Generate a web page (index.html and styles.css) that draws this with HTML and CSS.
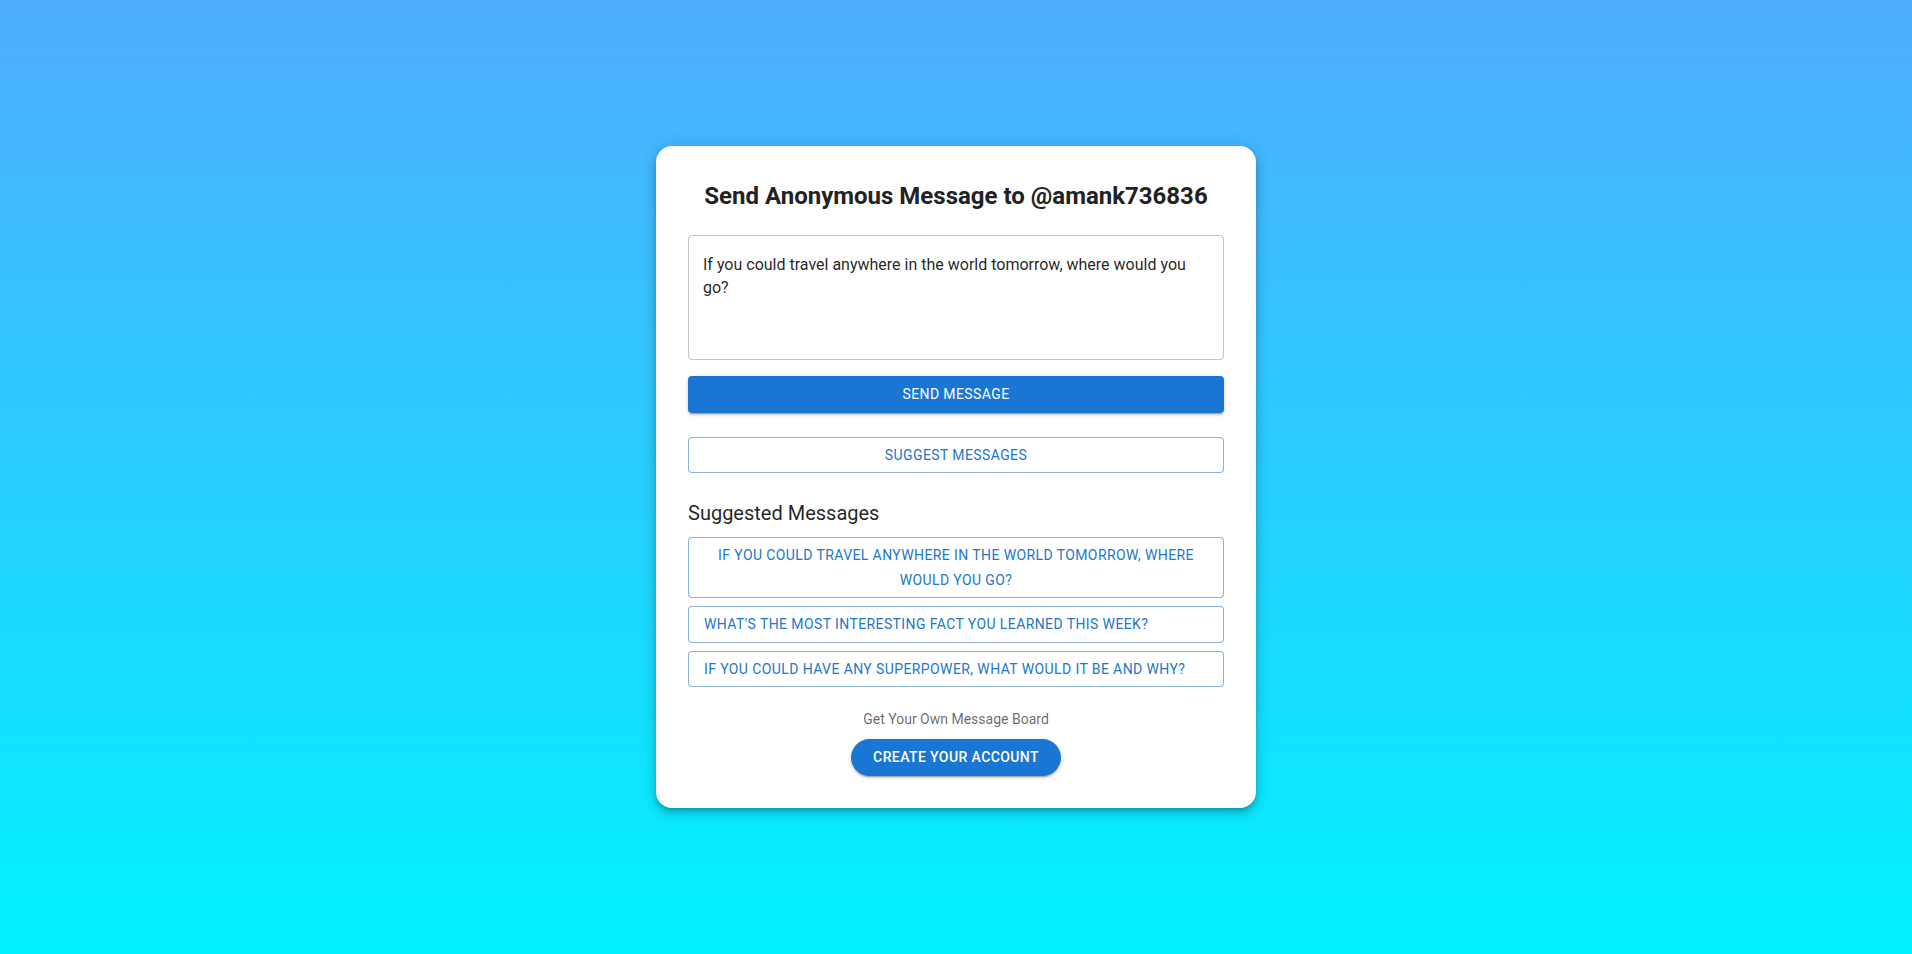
FILE: index.html
```html
<!DOCTYPE html>
<html lang="en">
<head>
    <meta charset="UTF-8">
    <meta name="viewport" content="width=device-width, initial-scale=1.0">
    <title>Send Anonymous Message</title>
    <link rel="stylesheet" href="styles.css">
</head>
<body>
    <main class="page">
        <section class="card">
            <h1 class="title">Send Anonymous Message to @amank736836</h1>

            <div class="field">
                <textarea class="field-input" rows="4">If you could travel anywhere in the world tomorrow, where would you go?</textarea>
            </div>

            <button class="btn btn-contained btn-full">Send Message</button>
            <button class="btn btn-outlined btn-full btn-suggest">Suggest Messages</button>

            <h2 class="subtitle">Suggested Messages</h2>
            <div class="suggestions">
                <button class="btn btn-outlined btn-full btn-left">If you could travel anywhere in the world tomorrow, where would you go?</button>
                <button class="btn btn-outlined btn-full btn-left">What's the most interesting fact you learned this week?</button>
                <button class="btn btn-outlined btn-full btn-left">If you could have any superpower, what would it be and why?</button>
            </div>

            <div class="signup">
                <p class="signup-text">Get Your Own Message Board</p>
                <button class="btn btn-contained btn-pill">Create Your Account</button>
            </div>
        </section>
    </main>
</body>
</html>
```

FILE: styles.css
```css
* {
    margin: 0;
    padding: 0;
    box-sizing: border-box;
    font-family: Roboto, 'Helvetica Neue', Arial, sans-serif;
}

body {
    background: linear-gradient(to bottom, #4facfe, #00f2fe);
    color: rgba(0, 0, 0, 0.87);
    min-height: 100vh;
}

.page {
    min-height: 100vh;
    display: flex;
    align-items: center;
    justify-content: center;
}

.card {
    width: 600px;
    background: #fff;
    border-radius: 16px;
    padding: 32px;
    box-shadow: 0 3px 5px -1px rgba(0, 0, 0, 0.2),
                0 6px 10px 0 rgba(0, 0, 0, 0.14),
                0 1px 18px 0 rgba(0, 0, 0, 0.12);
}

.title {
    font-size: 24px;
    font-weight: 700;
    line-height: 1.334;
    text-align: center;
    color: #222;
    padding-top: 2px;
    margin-bottom: 23px;
}

.field {
    border: 1px solid rgba(0, 0, 0, 0.23);
    border-radius: 4px;
    padding: 16.5px 14px;
}

.field-input {
    display: block;
    width: 100%;
    height: 90px;
    border: none;
    outline: none;
    resize: none;
    font-size: 16px;
    line-height: 23px;
    color: rgba(0, 0, 0, 0.87);
    background: transparent;
}

.btn {
    display: inline-flex;
    align-items: center;
    justify-content: center;
    font-size: 14px;
    font-weight: 400;
    line-height: 1.75;
    letter-spacing: 0.02857em;
    text-transform: uppercase;
    border-radius: 4px;
    cursor: pointer;
    text-align: center;
}

.btn-contained {
    background: #1976d2;
    color: #fff;
    border: none;
    padding: 6px 16px;
    box-shadow: 0 3px 1px -2px rgba(0, 0, 0, 0.2),
                0 2px 2px 0 rgba(0, 0, 0, 0.14),
                0 1px 5px 0 rgba(0, 0, 0, 0.12);
}

.btn-outlined {
    background: #fff;
    color: #2277c8;
    border: 1px solid rgba(25, 100, 180, 0.5);
    padding: 5px 15px;
}

.btn-full {
    display: flex;
    width: 100%;
    margin-top: 16px;
}

.btn-suggest {
    margin-top: 24px;
}

.subtitle {
    font-size: 20px;
    font-weight: 400;
    line-height: 1.6;
    margin-top: 24px;
    margin-bottom: 8px;
}

.suggestions {
    display: flex;
    flex-direction: column;
    gap: 8px;
}

.suggestions .btn-full {
    margin-top: 0;
}

.btn-left {
    justify-content: flex-start;
}

.signup {
    display: flex;
    flex-direction: column;
    align-items: center;
    margin-top: 22px;
}

.signup-text {
    font-size: 14px;
    line-height: 1.43;
    color: rgba(0, 0, 0, 0.6);
    margin-bottom: 10px;
}

.btn-pill {
    font-weight: 500;
    border-radius: 999px;
    padding: 6px 22px;
}
```
